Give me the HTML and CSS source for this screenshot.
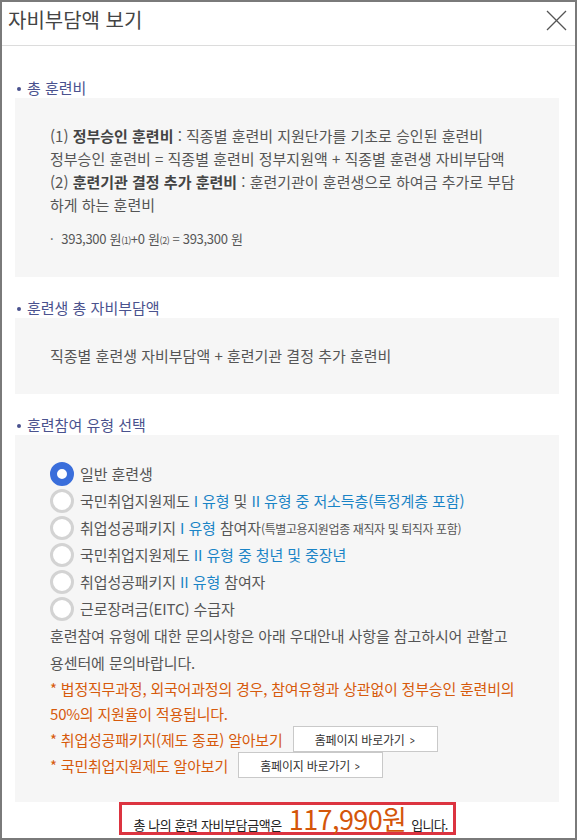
FILE: index.html
```html
<!DOCTYPE html>
<html lang="ko">
<head>
    <meta charset="UTF-8">
    <meta name="viewport" content="width=device-width, initial-scale=1.0">
    <title>자비부담액 보기</title>
    <link rel="stylesheet" href="styles.css">
</head>
<body>
    <div class="popup">
        <div class="popup-header">
            <h2>자비부담액 보기</h2>
            <button class="close-btn" type="button" aria-label="닫기">
                <svg width="21" height="21" viewBox="0 0 21 21">
                    <line x1="1" y1="1" x2="20" y2="20" stroke="#555" stroke-width="1.3"/>
                    <line x1="20" y1="1" x2="1" y2="20" stroke="#555" stroke-width="1.3"/>
                </svg>
            </button>
        </div>

        <div class="popup-body">
            <h3 class="sec-title">총 훈련비</h3>
            <div class="sec-box">
                <p>(1) <strong>정부승인 훈련비</strong> : 직종별 훈련비 지원단가를 기초로 승인된 훈련비</p>
                <p>정부승인 훈련비 = 직종별 훈련비 정부지원액 + 직종별 훈련생 자비부담액</p>
                <p>(2) <strong>훈련기관 결정 추가 훈련비</strong> : 훈련기관이 훈련생으로 하여금 추가로 부담하게 하는 훈련비</p>
                <p class="calc"><span class="dot">·</span>393,300 원<span class="sub">(1)</span>+0 원<span class="sub">(2)</span> = 393,300 원</p>
            </div>

            <h3 class="sec-title">훈련생 총 자비부담액</h3>
            <div class="sec-box">
                <p>직종별 훈련생 자비부담액 + 훈련기관 결정 추가 훈련비</p>
            </div>

            <h3 class="sec-title">훈련참여 유형 선택</h3>
            <div class="sec-box type-box">
                <ul class="radio-list">
                    <li><span class="radio checked"></span><span class="label">일반 훈련생</span></li>
                    <li><span class="radio"></span><span class="label">국민취업지원제도 <span class="blue">I 유형</span> 및 <span class="blue">II 유형 중 저소득층(특정계층 포함)</span></span></li>
                    <li><span class="radio"></span><span class="label">취업성공패키지 <span class="blue">I 유형</span> 참여자<small>(특별고용지원업종 재직자 및 퇴직자 포함)</small></span></li>
                    <li><span class="radio"></span><span class="label">국민취업지원제도 <span class="blue">II 유형 중 청년 및 중장년</span></span></li>
                    <li><span class="radio"></span><span class="label">취업성공패키지 <span class="blue">II 유형</span> 참여자</span></li>
                    <li><span class="radio"></span><span class="label">근로장려금(EITC) 수급자</span></li>
                </ul>
                <p class="notice">훈련참여 유형에 대한 문의사항은 아래 우대안내 사항을 참고하시어 관할고용센터에 문의바랍니다.</p>
                <p class="warn">* 법정직무과정, 외국어과정의 경우, 참여유형과 상관없이 정부승인 훈련비의 50%의 지원율이 적용됩니다.</p>
                <div class="link-row">
                    <span class="warn">* 취업성공패키지(제도 종료) 알아보기</span>
                    <button class="link-btn" type="button">홈페이지 바로가기 <span class="arrow">&gt;</span></button>
                </div>
                <div class="link-row">
                    <span class="warn">* 국민취업지원제도 알아보기</span>
                    <button class="link-btn" type="button">홈페이지 바로가기 <span class="arrow">&gt;</span></button>
                </div>
            </div>

            <div class="total-wrap">
                <div class="total">총 나의 훈련 자비부담금액은 <em>117,990원</em> <span class="tail">입니다.</span></div>
            </div>
        </div>
    </div>
</body>
</html>
```

FILE: styles.css
```css
* {
    margin: 0;
    padding: 0;
    box-sizing: border-box;
}

body {
    font-family: "Noto Sans CJK KR", "Noto Sans", sans-serif;
    background: white;
    color: #555;
}

.popup {
    width: 577px;
    height: 840px;
    border: 2px solid #7a7a7a;
    overflow: hidden;
    background: white;
}

.popup-header {
    height: 44px;
    border-bottom: 1px solid #dcdcdc;
    display: flex;
    justify-content: space-between;
    align-items: flex-start;
    padding: 2px 8px 0 6px;
}

.popup-header h2 {
    font-size: 20px;
    font-weight: 400;
    line-height: 32px;
    color: #444;
}

.close-btn {
    background: none;
    border: none;
    margin-top: 6px;
    width: 21px;
    height: 21px;
    cursor: pointer;
}

.popup-body {
    padding: 32px 16px 0 13px;
}

.sec-title {
    font-size: 15px;
    font-weight: 400;
    line-height: 20px;
    color: #4a528e;
    display: flex;
    align-items: center;
}

.sec-title::before {
    content: "";
    width: 4px;
    height: 4px;
    border-radius: 50%;
    background: #4a528e;
    margin: 1px 6px 0 2px;
}

.sec-box {
    background: #f6f6f6;
    padding: 26px 40px 27px 35px;
    margin-bottom: 21px;
    font-size: 15px;
    line-height: 23px;
}

.sec-box strong {
    color: #444;
    font-weight: 700;
}

.calc {
    margin-top: 14px;
    font-size: 13px;
    line-height: 18px;
    letter-spacing: -0.3px;
}

.calc .dot {
    margin-right: 8px;
}

.calc .sub {
    font-size: 9px;
    letter-spacing: -0.5px;
}

.type-box {
    padding: 25px 40px 24px 35px;
    margin-bottom: 0;
}

.radio-list {
    list-style: none;
}

.radio-list li {
    display: flex;
    align-items: center;
    height: 27px;
    white-space: nowrap;
    letter-spacing: -0.1px;
}

.radio-list small {
    font-size: 12px;
    letter-spacing: -0.4px;
}

.radio {
    width: 24px;
    height: 24px;
    border-radius: 50%;
    background: white;
    border: 3px solid #d3d3d3;
    margin-right: 6px;
    flex-shrink: 0;
}

.radio.checked {
    border: 7px solid #3a6edb;
}

.blue {
    color: #1a84c6;
}

.notice {
    line-height: 27px;
    letter-spacing: -0.1px;
}

.warn {
    color: #d65a0c;
    line-height: 25px;
    letter-spacing: -0.2px;
}

.link-row {
    display: flex;
    align-items: center;
    height: 26px;
}

.link-btn {
    margin-left: 10px;
    width: 145px;
    height: 26px;
    background: white;
    border: 1px solid #c9c9c9;
    font-family: inherit;
    font-size: 12px;
    color: #333;
    letter-spacing: -0.2px;
    cursor: pointer;
}

.link-btn .arrow {
    display: inline-block;
    transform: scaleX(0.7);
    margin-left: 1px;
}

.total-wrap {
    text-align: center;
    padding-left: 1px;
}

.total {
    display: inline-flex;
    align-items: baseline;
    gap: 4px;
    height: 33px;
    border: 3px solid #dc3440;
    padding: 0 5px 0 11px;
    font-size: 13px;
    line-height: 27px;
    color: #222;
    letter-spacing: -0.4px;
}

.total em {
    font-style: normal;
    font-size: 27px;
    color: #d4560a;
    letter-spacing: -0.6px;
    margin: 0 1px 0 3px;
}

.total .tail {
    letter-spacing: -0.8px;
}
```
